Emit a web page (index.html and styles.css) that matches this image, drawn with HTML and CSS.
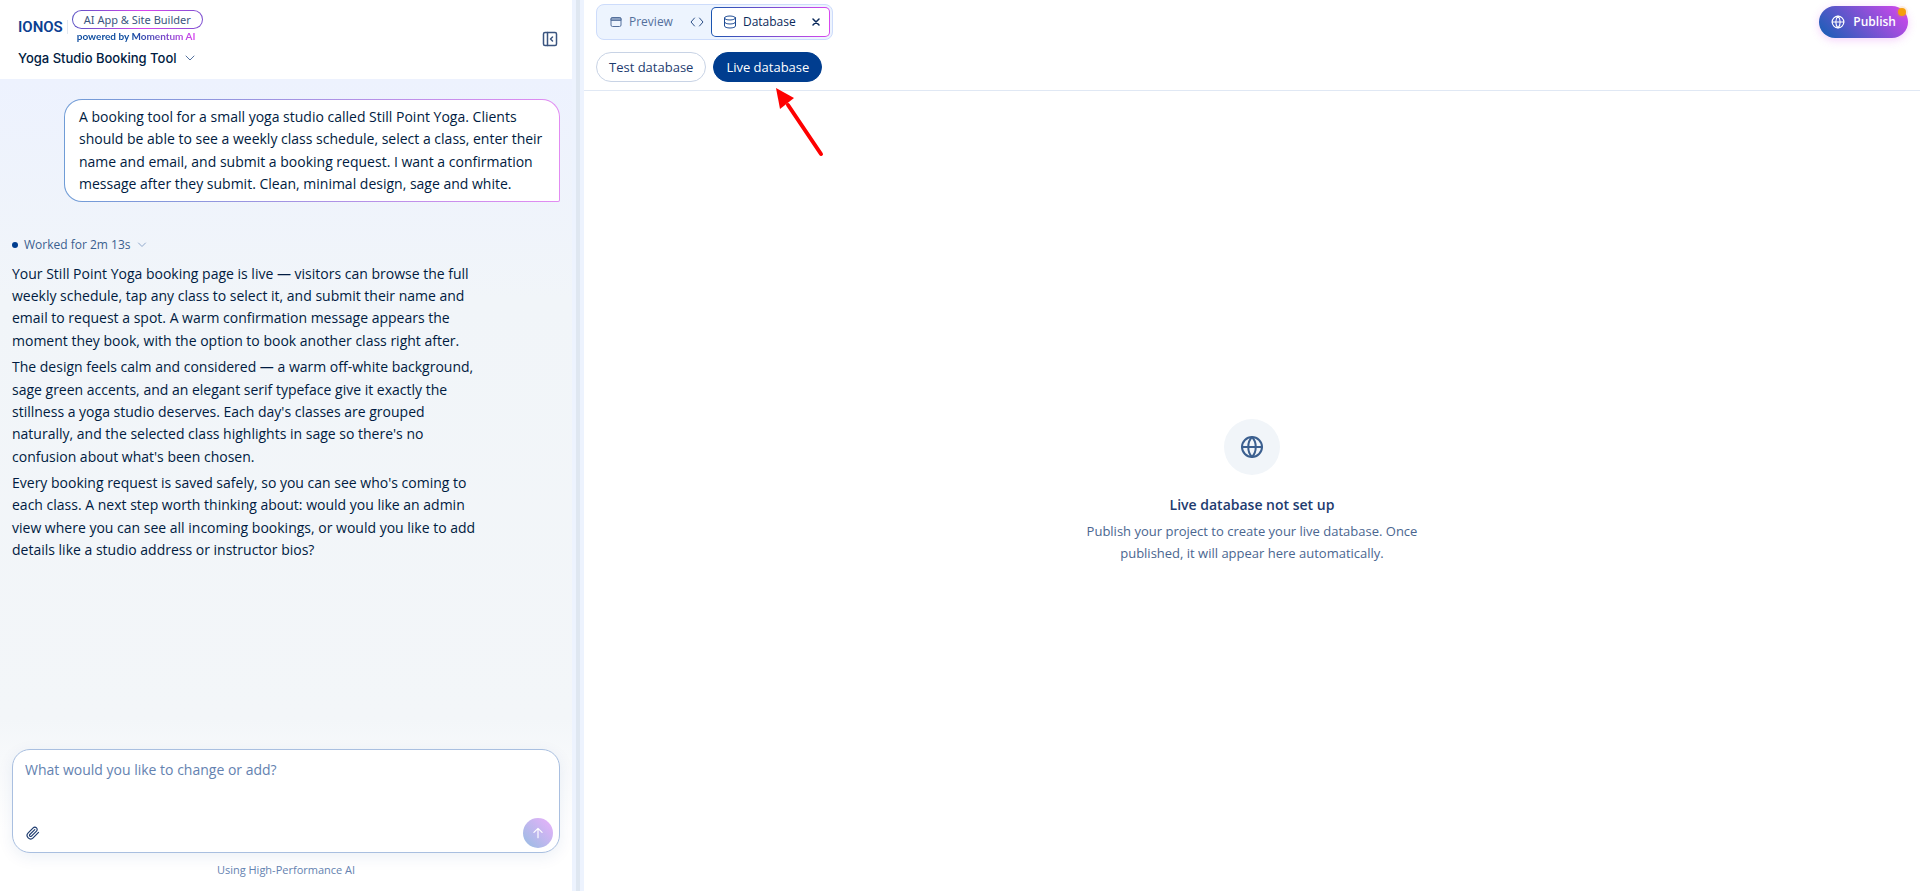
FILE: index.html
```html
<!DOCTYPE html>
<html lang="en">
<head>
<meta charset="utf-8">
<meta name="viewport" content="width=device-width, initial-scale=1">
<title>Yoga Studio Booking Tool</title>
<link rel="stylesheet" href="styles.css">
</head>
<body>
<div class="app">
  <section class="chat">
    <header class="chat-header">
      <div class="brand-block">
        <div class="brand">
          <span class="wordmark">IONOS</span>
          <div class="product">
            <span class="product-pill">AI App &amp; Site Builder</span>
            <span class="powered">powered by Momentum AI</span>
          </div>
        </div>
        <button class="project" type="button">Yoga Studio Booking Tool
          <svg class="chevron" viewBox="0 0 10 10"><path d="M1 3l4 4 4-4"/></svg>
        </button>
      </div>
      <button class="collapse" type="button" aria-label="Collapse panel">
        <svg viewBox="0 0 16 16"><rect x="1.5" y="1.5" width="13" height="13" rx="1.5"/><path d="M5.5 1.5v13M10.500 6L8.500 8l2 2"/></svg>
      </button>
    </header>
    <div class="thread">
      <p class="bubble">A booking tool for a small yoga studio called Still Point Yoga. Clients should be able to see a weekly class schedule, select a class, enter their name and email, and submit a booking request. I want a confirmation message after they submit. Clean, minimal design, sage and white.</p>
      <button class="worked" type="button"><span class="dot"></span>Worked for 2m 13s
        <svg class="chevron" viewBox="0 0 10 10"><path d="M1.500 3L5 6.500 8.500 3"/></svg>
      </button>
      <div class="reply">
        <p>Your Still Point Yoga booking page is live — visitors can browse the full weekly schedule, tap any class to select it, and submit their name and email to request a spot. A warm confirmation message appears the moment they book, with the option to book another class right after.</p>
        <p>The design feels calm and considered — a warm off-white background, sage green accents, and an elegant serif typeface give it exactly the stillness a yoga studio deserves. Each day's classes are grouped naturally, and the selected class highlights in sage so there's no confusion about what's been chosen.</p>
        <p>Every booking request is saved safely, so you can see who's coming to each class. A next step worth thinking about: would you like an admin view where you can see all incoming bookings, or would you like to add details like a studio address or instructor bios?</p>
      </div>
    </div>
    <footer class="composer-area">
      <form class="composer">
        <textarea aria-label="Message" placeholder="What would you like to change or add?"></textarea>
        <div class="composer-actions">
          <button class="attach" type="button" aria-label="Attach file">
            <svg viewBox="0 0 24 24"><path d="m21.440 11.050-9.190 9.190a6 6 0 0 1-8.490-8.490l8.570-8.570A4 4 0 1 1 18 8.840l-8.590 8.570a2 2 0 0 1-2.830-2.830l8.490-8.480"/></svg>
          </button>
          <button class="send" type="button" aria-label="Send">
            <svg viewBox="0 0 24 24"><path d="M12 20V4M5 11l7-7 7 7"/></svg>
          </button>
        </div>
      </form>
      <p class="note">Using High-Performance AI</p>
    </footer>
  </section>
  <div class="splitter"></div>
  <main class="workspace">
    <header class="workspace-header">
      <div class="top-row">
        <nav class="tabs">
          <button class="tab" type="button">
            <svg viewBox="0 0 12 12"><rect x="1" y="1.500" width="10" height="9" rx="1.500"/><path class="tab-window" d="M1 4V3a1.500 1.500 0 0 1 1.500-1.500h7A1.500 1.500 0 0 1 11 3v1z"/></svg>Preview
          </button>
          <button class="tab code" type="button" aria-label="Code">
            <svg viewBox="0 0 14 14"><path d="M4.500 3L1 7l3.500 4M9.500 3L13 7l-3.500 4"/></svg>
          </button>
          <div class="tab-active">
            <button class="tab current" type="button">
              <svg viewBox="0 0 14 14"><ellipse cx="7" cy="3" rx="5.500" ry="2"/><path d="M1.500 3v8c0 1.100 2.500 2 5.500 2s5.500-.9 5.500-2V3M1.500 7c0 1.100 2.500 2 5.500 2s5.500-.9 5.500-2"/></svg>Database
            </button>
            <button class="close" type="button" aria-label="Close database tab">
              <svg viewBox="0 0 8 8"><path d="M1 1l6 6M7 1L1 7"/></svg>
            </button>
          </div>
        </nav>
        <button class="publish" type="button">
          <svg viewBox="0 0 24 24"><circle cx="12" cy="12" r="10"/><path d="M2 12h20M12 2c5 5 5 15 0 20M12 2c-5 5-5 15 0 20"/></svg>Publish<span class="badge"></span>
        </button>
      </div>
      <div class="switch">
        <button class="pill" type="button">Test database</button>
        <button class="pill selected" type="button">Live database</button>
        <svg class="pointer" viewBox="0 0 48 70"><path class="pointer-line" d="M12 17L45 66"/><path class="pointer-head" d="M0 0L18 10 4 21z"/></svg>
      </div>
    </header>
    <div class="empty">
      <div class="empty-icon"><svg viewBox="0 0 24 24"><circle cx="12" cy="12" r="10"/><path d="M2 12h20M12 2c5 5 5 15 0 20M12 2c-5 5-5 15 0 20"/></svg></div>
      <h2>Live database not set up</h2>
      <p>Publish your project to create your live database. Once published, it will appear here automatically.</p>
    </div>
  </main>
</div>
</body>
</html>
```
FILE: styles.css
```css
* { box-sizing: border-box; }
body { margin: 0; color: #001b41; font: 14px/1.6 "Open Sans", "Noto Sans", sans-serif; }
button, textarea { font: inherit; color: inherit; }
button { margin: 0; padding: 0; border: 0; background: none; cursor: pointer; display: flex; align-items: center; }
p, h2 { margin: 0; }
svg { display: block; flex: none; fill: none; stroke: currentColor; stroke-width: 2; stroke-linecap: round; stroke-linejoin: round; }

.app { display: flex; height: 100vh; }

.chat { display: flex; flex-direction: column; width: calc(30% - 4px); min-width: 320px; background: linear-gradient(#edf2fe 80px, #f1f5f9 300px, #f3f6f9 720px, #fff 830px); }
.chat-header { display: flex; justify-content: space-between; align-items: flex-start; padding: 10px 14px 12px 18px; background: #fff; }
.brand { display: flex; align-items: center; gap: 4px; }
.wordmark { padding-right: 4px; border-right: 1px solid #e2e8f0; color: #0b3f91; font: 600 15px/14px Roboto, "Liberation Sans", sans-serif; }
.product { display: flex; flex-direction: column; align-items: flex-start; }
.product-pill { padding: 0 11px; border: 1px solid transparent; border-radius: 10px; background: linear-gradient(#fff, #fff) padding-box, linear-gradient(90deg, #5a52c4, #d946ef 55%, #7c4fd0) border-box; color: #3b5580; font: 11px/17px "Noto Sans", sans-serif; }
.powered { margin-left: 5px; color: transparent; background: linear-gradient(90deg, #0b4a9e 45%, #d946ef) text; font: 700 10px/14px Lato, sans-serif; }
.project { gap: 8px; margin-top: 6px; font: 500 13px/18px Inter, sans-serif; }
.chevron { width: 10px; height: 10px; color: #54719e; stroke-width: 1; }
.collapse { margin-top: 21px; color: #3b5580; }
.collapse svg { width: 16px; height: 16px; stroke-width: 1.5; }

.thread { flex: 1; min-height: 0; padding: 20px 12px 0; }
.bubble { width: 496px; max-width: 100%; margin-left: auto; padding: 6px 14px 5px; border: 1px solid transparent; border-radius: 18px 18px 2px 18px; background: linear-gradient(#fff, #fff) padding-box, linear-gradient(90deg, #6f9cd6, #e28bf2) border-box; }
.worked { gap: 6px; margin-top: 34px; color: #3b5f8f; font-size: 12px; line-height: 18px; }
.worked .chevron { color: #8fa8cc; }
.dot { width: 6px; height: 6px; border-radius: 50%; background: #003d8f; }
.reply { display: flex; flex-direction: column; gap: 4px; max-width: 468px; margin-top: 9px; }

.composer-area { padding: 0 12px 12px; }
.composer { padding: 9px 6px 4px 12px; border: 1px solid #a9bfe0; border-radius: 18px; background: #fff; box-shadow: 0 4px 16px #003d8f14; }
.composer textarea { display: block; width: 100%; height: 59px; padding: 0; border: 0; outline: 0; resize: none; background: none; }
.composer textarea::placeholder { color: #6482b0; opacity: 1; }
.composer-actions { display: flex; justify-content: space-between; align-items: center; }
.attach { padding-left: 1px; color: #1d3b6f; }
.attach svg { width: 14px; height: 14px; }
.send { justify-content: center; width: 30px; height: 30px; border-radius: 50%; background: linear-gradient(45deg, #96bde2, #ebb1fb); color: #fff; }
.send svg { width: 14px; height: 14px; }
.note { margin-top: 8px; color: #6482b0; font-size: 11px; line-height: 18px; text-align: center; }

.splitter { width: 12px; border: solid #edf3fe; border-width: 0 4px; background: #dfe7f1; }

.workspace { display: flex; flex: 1; flex-direction: column; min-width: 0; background: #fff; }
.workspace-header { padding: 4px 12px 8px; border-bottom: 1px solid #e0e8f4; }
.top-row { display: flex; justify-content: space-between; align-items: center; height: 36px; }
.tabs { display: flex; align-items: center; padding: 2px; border: 1px solid #cddcfb; border-radius: 8px; background: #edf4fe; font-size: 12px; }
.tab { gap: 7px; padding: 0 11px; color: #54709c; line-height: 28px; }
.tab svg { width: 12px; height: 12px; stroke-width: 1; }
.tab .tab-window { fill: #8ca1c2; }
.tab.code { padding: 0 7px 0 6px; color: #2d5088; }
.tab.code svg { width: 14px; height: 14px; }
.tab-active { display: flex; border: 1px solid transparent; border-radius: 5px; background: linear-gradient(#fff, #fff) padding-box, linear-gradient(90deg, #1a55b0, #d946ef) border-box; }
.tab.current { gap: 6px; padding-right: 12px; color: #0b2a5b; }
.tab.current svg { width: 14px; height: 14px; color: #1f4c94; }
.close { padding: 0 9px 0 4px; color: #0b2a5b; }
.close svg { width: 8px; height: 8px; stroke-width: 1.5; }
.publish { position: relative; height: 32px; padding: 0 12px; border-radius: 16px; background: linear-gradient(45deg, #1260b4, #d946ef); color: #fff; font-weight: 600; font-size: 12px; box-shadow: 0 2px 8px #d946ef40; }
.publish svg { width: 14px; height: 14px; margin-right: 8px; }
.badge { position: absolute; top: 2px; right: 2px; width: 8px; height: 8px; border-radius: 50%; background: #f59e0b; box-shadow: 0 0 0 2px #f59e0b26; }
.switch { position: relative; display: flex; gap: 7px; margin-top: 12px; }
.pill { padding: 0 12px; border: 1px solid #c8d3e5; border-radius: 15px; color: #1d3b6f; font-size: 13px; line-height: 28px; }
.pill.selected { border-color: #003d8f; background: #003d8f; color: #fff; }
.pointer { position: absolute; left: 180px; top: 36px; width: 48px; height: 70px; }
.pointer-line { stroke: #fe0000; stroke-width: 4; }
.pointer-head { fill: #fe0000; stroke: none; }

.empty { display: flex; flex: 1; flex-direction: column; align-items: center; justify-content: center; text-align: center; }
.empty-icon { display: grid; place-items: center; width: 56px; height: 56px; border-radius: 50%; background: #f1f5f9; color: #3b5f8f; }
.empty-icon svg { width: 24px; height: 24px; }
.empty h2 { margin-top: 20px; color: #1d3b6f; font-size: 14px; font-weight: 600; line-height: 20px; }
.empty p { max-width: 336px; margin-top: 5px; color: #4a6690; font-size: 13px; line-height: 22px; }
```
